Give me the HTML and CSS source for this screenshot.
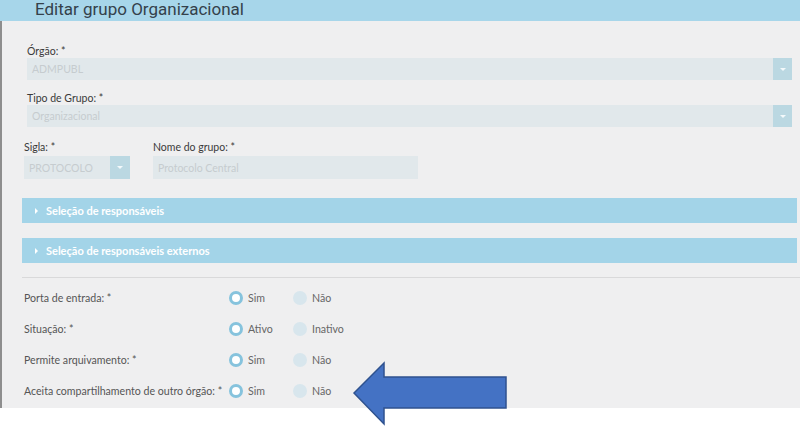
FILE: index.html
```html
<!DOCTYPE html>
<html lang="pt">
<head>
<meta charset="utf-8">
<link rel="stylesheet" href="styles.css">
</head>
<body>
<div class="header"><h1 class="title">Editar grupo Organizacional</h1></div>
<div class="panel">
  <div class="field wide">
    <label class="lbl">Órgão: *</label>
    <div class="select"><span class="val">ADMPUBL</span><span class="btn"><span class="caret"></span></span></div>
  </div>
  <div class="field wide second">
    <label class="lbl">Tipo de Grupo: *</label>
    <div class="select"><span class="val">Organizacional</span><span class="btn"><span class="caret"></span></span></div>
  </div>
  <div class="row-fields">
    <div class="field sigla">
      <label class="lbl">Sigla: *</label>
      <div class="select tall"><span class="val">PROTOCOLO</span><span class="btn"><span class="caret"></span></span></div>
    </div>
    <div class="field nome">
      <label class="lbl">Nome do grupo: *</label>
      <div class="input tall"><span class="val">Protocolo Central</span></div>
    </div>
  </div>
  <div class="acc first"><span class="tri"></span>Seleção de responsáveis</div>
  <div class="acc"><span class="tri"></span>Seleção de responsáveis externos</div>
  <div class="sep"></div>
  <div class="radios">
    <div class="rrow"><span class="rlbl">Porta de entrada: *</span><span class="opt"><span class="dot on"></span>Sim</span><span class="opt"><span class="dot"></span>Não</span></div>
    <div class="rrow"><span class="rlbl">Situação: *</span><span class="opt"><span class="dot on"></span>Ativo</span><span class="opt"><span class="dot"></span>Inativo</span></div>
    <div class="rrow"><span class="rlbl">Permite arquivamento: *</span><span class="opt"><span class="dot on"></span>Sim</span><span class="opt"><span class="dot"></span>Não</span></div>
    <div class="rrow"><span class="rlbl">Aceita compartilhamento de outro órgão: *</span><span class="opt"><span class="dot on"></span>Sim</span><span class="opt"><span class="dot"></span>Não</span></div>
  </div>
  <svg class="arrow" width="160" height="66" viewBox="0 0 160 66"><polygon points="2,32 32,2 32,16 154,16 154,47 32,47 32,63" fill="#4472c4" stroke="#2f528f" stroke-width="1.5"/></svg>
</div>
</body>
</html>
```
FILE: styles.css
```css
* { box-sizing: border-box; }
body { margin: 0; background: #ffffff; font-family: Lato, "Open Sans", sans-serif; width: 800px; height: 427px; overflow: hidden; }
.header { height: 21px; background: #a7d6ea; overflow: hidden; }
.title { margin: 0; padding-left: 35px; font-family: Roboto, "Open Sans", sans-serif; font-weight: 400; font-size: 17px; line-height: 19px; color: #34414b; }
.panel { position: relative; height: 387px; background: #efeff0; border-left: 2px solid #8e8e8e; padding: 24px 0 0 20px; }
.lbl { display: block; font-size: 10.5px; line-height: 12px; color: #3a3a3a; height: 12px; }
.field.wide { margin-left: 5px; width: 765px; }
.field.wide .select { margin-top: 1px; }
.field.second { margin-top: 12px; }
.select, .input { display: flex; height: 22px; background: #e1e8eb; align-items: center; }
.select.tall, .input.tall { height: 23px; margin-top: 3px; }
.val { flex: 1; padding-left: 5px; font-size: 10.5px; color: #c6cccf; }
.btn { width: 19px; height: 100%; background: #bbd8e2; display: flex; align-items: center; justify-content: center; }
.caret { width: 0; height: 0; border-left: 3px solid transparent; border-right: 3px solid transparent; border-top: 3px solid #f4f9fb; }
.row-fields { display: flex; margin-top: 14px; margin-left: 2px; gap: 23px; }
.sigla { width: 106px; }
.sigla .btn { width: 20px; }
.nome { width: 265px; }
.acc { margin-top: 15px; height: 25px; width: 775px; background: #a3d4e8; color: #ffffff; font-weight: 700; font-size: 11px; display: flex; align-items: center; padding-left: 13px; }
.acc.first { margin-top: 19px; }
.tri { width: 0; height: 0; border-top: 3px solid transparent; border-bottom: 3px solid transparent; border-left: 3px solid #ffffff; margin-right: 8px; }
.sep { margin-top: 14px; height: 1px; background: #d9d9da; }
.radios { margin-top: 4px; padding-left: 2px; }
.rrow { display: flex; align-items: center; height: 31px; font-size: 10.6px; color: #555; }
.rrow:nth-child(4) { height: 32px; }
.rlbl { width: 205px; }
.opt { display: flex; align-items: center; width: 64px; color: #666; }
.dot { width: 14px; height: 14px; border-radius: 50%; background: #d8e6ed; margin-right: 5px; }
.dot.on { background: #ffffff; border: 3.5px solid #86c3dd; }
.arrow { position: absolute; left: 350px; top: 340px; }
```
